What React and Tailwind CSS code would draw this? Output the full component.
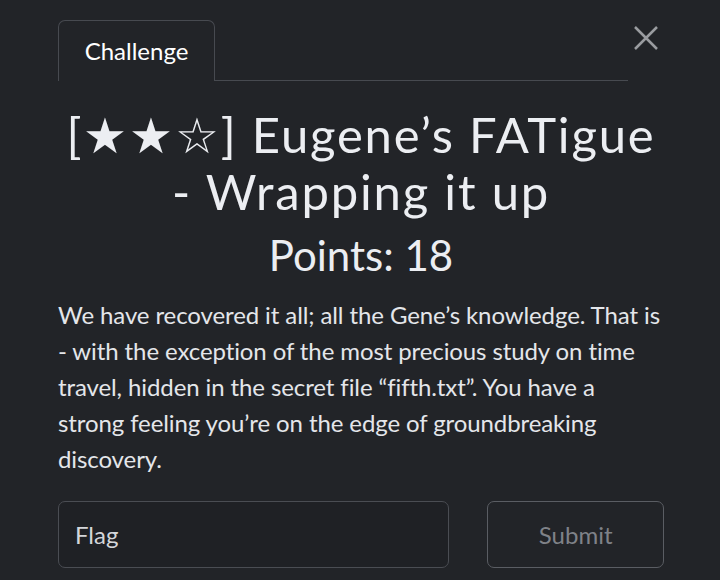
import React from "react";

const App = () => {
  return (
    <div
      className="w-[720px] h-[580px] bg-[#222428] text-[#e4e6ea] overflow-hidden"
      style={{ fontFamily: "Lato, 'Open Sans', sans-serif" }}
    >
      <div className="pl-[58px] pr-[56px] pt-[20px]">
        {/* Tabs + close */}
        <div className="flex items-start">
          <div className="flex-1 flex items-end">
            <div className="w-[157px] h-[61px] border border-b-0 border-[#474a50] rounded-t-[7px] flex items-center justify-center text-[24px] text-white">
              Challenge
            </div>
            <div className="flex-1 border-b border-[#474a50]" />
          </div>
          <button className="ml-[6px] mr-[6px] mt-[6px] w-[24px] h-[24px] flex items-center justify-center text-[#9a9ca0]">
            <svg width="24" height="24" viewBox="0 0 24 24" fill="none" stroke="currentColor" strokeWidth="2.5">
              <path d="M1 1 L23 23 M23 1 L1 23" />
            </svg>
          </button>
        </div>

        {/* Title */}
        <h1 className="mt-[25px] text-center text-[49px] leading-[57px] tracking-[1.8px] text-[#eceef2] font-normal">
          [★★☆] Eugene’s FATigue
          <br />- Wrapping it up
        </h1>
        <h2 className="mt-[10px] text-center text-[42px] leading-[50px] text-[#eceef2]">
          Points: 18
        </h2>

        {/* Description */}
        <p className="mt-[17px] text-[24px] leading-[36px] tracking-[-0.1px] text-[#e4e6ea]">
          We have recovered it all; all the Gene’s knowledge. That is - with the
          exception of the most precious study on time travel, hidden in the
          secret file “fifth.txt”. You have a strong feeling you’re on the edge
          of groundbreaking discovery.
        </p>

        {/* Flag form */}
        <div className="mt-[24px] flex gap-[38px]">
          <div className="w-[392px] h-[67px] border border-[#4a4d53] rounded-[7px] bg-[#1f2125] flex items-center px-[16px] text-[24px] text-[#d4d6da]">
            Flag
          </div>
          <button className="w-[177px] h-[67px] border border-[#5a5d63] rounded-[7px] flex items-center justify-center text-[24px] text-[#7f8288]">
            Submit
          </button>
        </div>
      </div>
    </div>
  );
};

export default App;
